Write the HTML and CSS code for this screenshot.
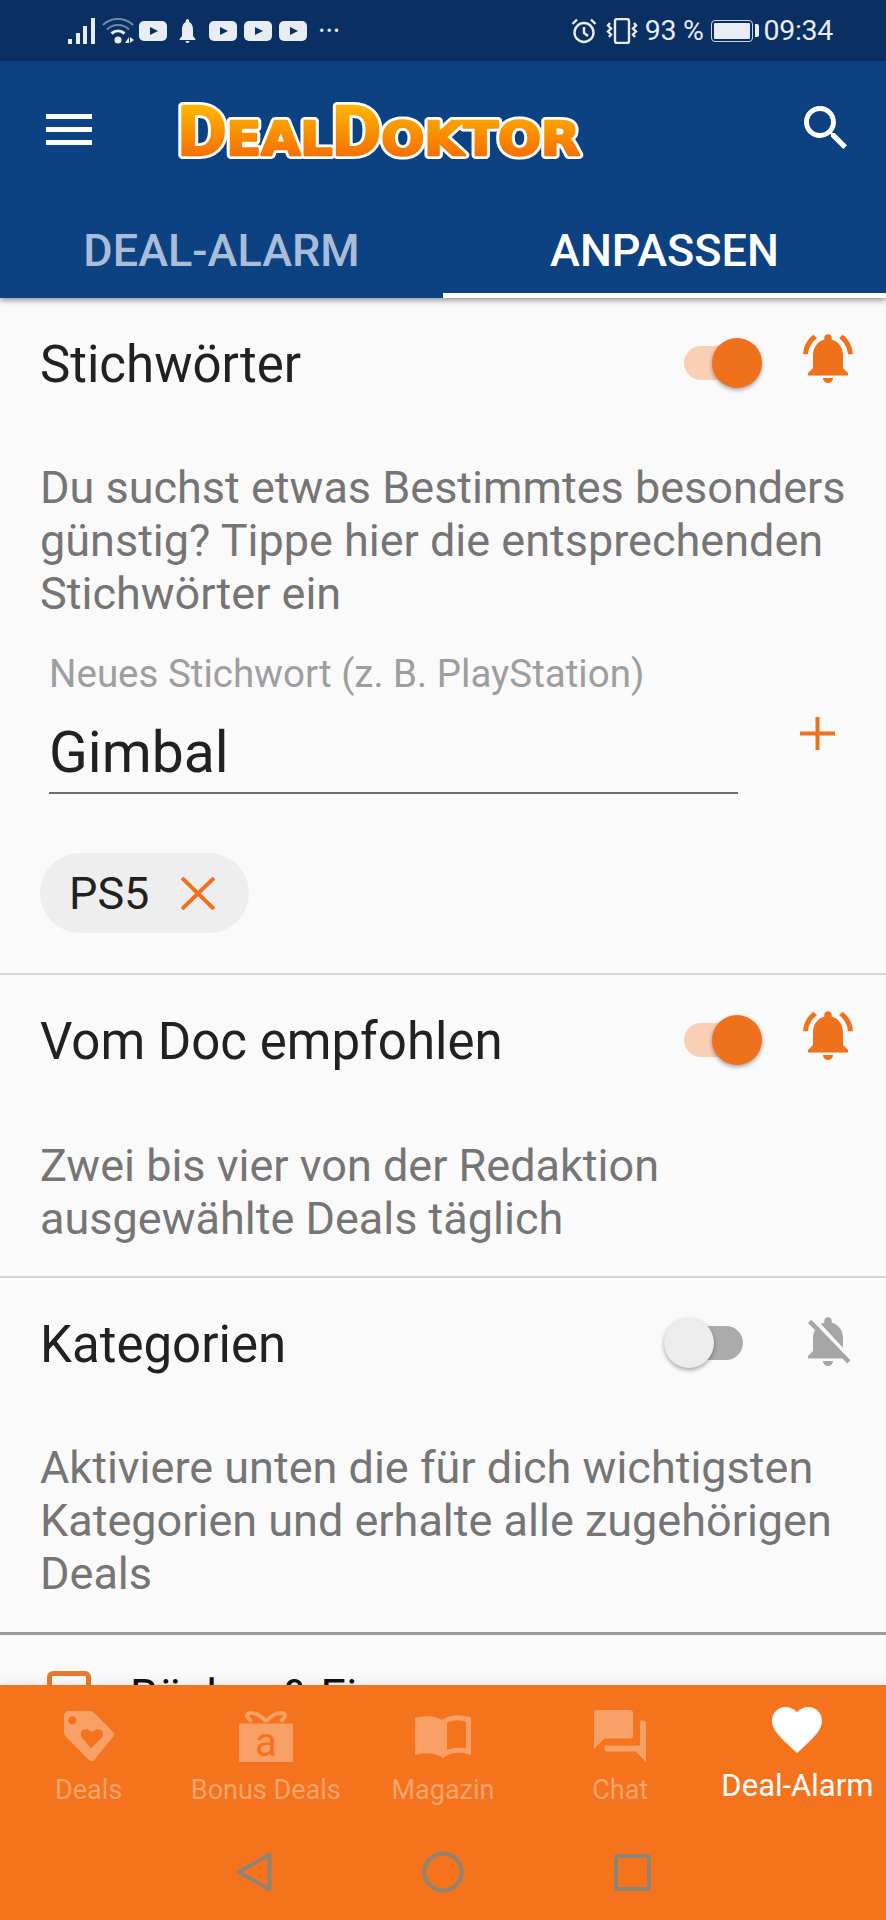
FILE: index.html
```html
<!DOCTYPE html>
<html lang="de">
<head>
    <meta charset="UTF-8">
    <meta name="viewport" content="width=device-width, initial-scale=1.0">
    <title>DealDoktor Deal-Alarm</title>
    <link rel="stylesheet" href="styles.css">
</head>
<body>
    <div class="phone">
        <div class="status-bar">
            <div class="status-left">
                <svg class="st-signal" viewBox="0 0 27 26"><path d="M0 21h4v5H0zM8 15h4v11H8zM15 8h4v18h-4zM23 0h4v26h-4z"/></svg>
                <svg class="st-wifi" viewBox="0 0 32 26"><path class="wifi-dim" d="M1 7c8-8 22-8 30 0M5 11.500c6-6 16-6 22 0"/><path class="wifi-on" d="M9.500 15.500c4-3.500 9-3.500 13 0"/><circle cx="16" cy="22" r="3.500"/><path d="M23 25l4-6v6zM28 19l4 3-4 3z"/></svg>
                <span class="st-play"></span>
                <svg class="st-bell" viewBox="0 0 24 24" preserveAspectRatio="none"><path d="M12 0c-1.300 0-2.300 1-2.300 2.300v.8C6.400 4.300 5 7.500 5 11v6l-3 3v1h20v-1l-3-3v-6c0-3.500-1.400-6.700-4.700-7.900v-.8C14.300 1 13.300 0 12 0zM9.500 22c0 1.300 1.100 2 2.500 2s2.500-.7 2.500-2z"/></svg>
                <span class="st-play st-gap"></span>
                <span class="st-play"></span>
                <span class="st-play"></span>
                <span class="st-dots">•••</span>
            </div>
            <div class="status-right">
                <svg class="st-alarm" viewBox="0 0 26 26"><circle cx="13" cy="14.500" r="9.500"/><path d="M13 9v6l4 3M1.500 6L6 1.500M24.500 6L20 1.500"/></svg>
                <svg class="st-vib" viewBox="0 0 32 26"><rect x="9" y="1" width="14" height="24" rx="2"/><path d="M4 5l-2 2.500 3 3-3 3 3 3-2 2.500M28 5l2 2.500-3 3 3 3-3 3 2 2.500"/></svg>
                <span class="st-text st-percent">93 %</span>
                <div class="st-battery"><span class="st-battery-fill"></span></div>
                <span class="st-battery-cap"></span>
                <span class="st-text st-time">09:34</span>
            </div>
        </div>

        <header class="app-header">
            <div class="toolbar">
                <div class="burger"><span></span><span></span><span></span></div>
                <svg class="logo" viewBox="0 -12 414 90">
                    <defs>
                        <linearGradient id="logoFill" x1="0" y1="0" x2="0" y2="1">
                            <stop offset="0.1" stop-color="#ffbe00"/>
                            <stop offset="0.85" stop-color="#f66a00"/>
                        </linearGradient>
                    </defs>
                    <text class="logo-outline" x="6" y="59" textLength="402" lengthAdjust="spacingAndGlyphs"><tspan class="logo-big">D</tspan>EAL<tspan class="logo-big">D</tspan>OKTOR</text>
                    <text class="logo-face" x="6" y="59" textLength="402" lengthAdjust="spacingAndGlyphs" fill="url(#logoFill)" stroke="url(#logoFill)"><tspan class="logo-big">D</tspan>EAL<tspan class="logo-big">D</tspan>OKTOR</text>
                </svg>
                <svg class="search" viewBox="3 3 17.500 17.500"><path d="M15.500 14h-.79l-.28-.27C15.410 12.590 16 11.110 16 9.500 16 5.910 13.090 3 9.500 3S3 5.910 3 9.500 5.910 16 9.500 16c1.610 0 3.090-.59 4.230-1.570l.27.28v.79l5 4.990L20.490 19l-4.990-5zm-6 0C7.010 14 5 11.990 5 9.500S7.010 5 9.500 5 14 7.010 14 9.500 11.990 14 9.500 14z"/></svg>
            </div>
            <div class="tabs">
                <div class="tab">DEAL-ALARM</div>
                <div class="tab tab-active">ANPASSEN</div>
            </div>
        </header>

        <main class="content">
            <section class="block">
                <div class="block-head">
                    <h2>Stichwörter</h2>
                    <div class="toggle toggle-on"><span class="track"></span><span class="thumb"></span></div>
                    <svg class="bell bell-on" viewBox="2 2 20 20"><path d="M7.580 4.080L6.150 2.650C3.750 4.480 2.170 7.300 2.030 10.500h2c.15-2.650 1.510-4.970 3.550-6.420zm12.390 6.420h2c-.15-3.200-1.730-6.020-4.120-7.850l-1.420 1.430c2.020 1.450 3.390 3.770 3.540 6.420zM18 11c0-3.070-1.640-5.640-4.500-6.320V4c0-.83-.67-1.500-1.500-1.500s-1.500.67-1.500 1.500v.68C7.630 5.360 6 7.920 6 11v5l-2 2v1h16v-1l-2-2v-5zm-6 11c.14 0 .27-.01.4-.04.65-.14 1.180-.58 1.440-1.180.1-.24.15-.5.15-.78h-4c.01 1.100.9 2 2.010 2z"/></svg>
                </div>
                <p class="block-text">Du suchst etwas Bestimmtes besonders günstig? Tippe hier die entsprechenden Stichwörter ein</p>
                <div class="keyword-form">
                    <div class="keyword-field">
                        <div class="keyword-label">Neues Stichwort (z. B. PlayStation)</div>
                        <div class="keyword-value">Gimbal</div>
                    </div>
                    <svg class="add-icon" viewBox="0 0 35 33"><path d="M17.500 0v33M0 16.500h35"/></svg>
                </div>
                <div class="chip">
                    <span>PS5</span>
                    <svg class="chip-x" viewBox="0 0 34 33"><path d="M1 1l32 31M33 1L1 32"/></svg>
                </div>
            </section>

            <section class="block block-middle">
                <div class="block-head">
                    <h2>Vom Doc empfohlen</h2>
                    <div class="toggle toggle-on"><span class="track"></span><span class="thumb"></span></div>
                    <svg class="bell bell-on" viewBox="2 2 20 20"><path d="M7.580 4.080L6.150 2.650C3.750 4.480 2.170 7.300 2.030 10.500h2c.15-2.650 1.510-4.970 3.550-6.420zm12.390 6.420h2c-.15-3.200-1.730-6.020-4.120-7.850l-1.420 1.430c2.020 1.450 3.390 3.770 3.540 6.420zM18 11c0-3.070-1.640-5.640-4.500-6.320V4c0-.83-.67-1.500-1.500-1.500s-1.500.67-1.500 1.500v.68C7.630 5.360 6 7.920 6 11v5l-2 2v1h16v-1l-2-2v-5zm-6 11c.14 0 .27-.01.4-.04.65-.14 1.180-.58 1.440-1.180.1-.24.15-.5.15-.78h-4c.01 1.100.9 2 2.010 2z"/></svg>
                </div>
                <p class="block-text">Zwei bis vier von der Redaktion ausgewählte Deals täglich</p>
            </section>

            <section class="block block-last">
                <div class="block-head">
                    <h2>Kategorien</h2>
                    <div class="toggle"><span class="track"></span><span class="thumb"></span></div>
                    <svg class="bell bell-off" viewBox="3 2 18 20"><path d="M20 18.690L7.840 6.140 5.270 3.490 4 4.760l2.800 2.800v.01c-.52.99-.8 2.160-.8 3.420v5l-2 2v1h13.730l2 2L21 19.720l-1-1.030zM12 22c1.110 0 2-.89 2-2h-4c0 1.110.89 2 2 2zm6-7.320V11c0-3.080-1.640-5.640-4.500-6.320V4c0-.83-.67-1.500-1.500-1.500s-1.500.67-1.500 1.500v.68c-.15.03-.29.08-.42.12-.1.03-.2.07-.3.11h-.01c-.2.080-.4.170-.59.270-.01 0-.01 0-.02.010L18 14.680z"/></svg>
                </div>
                <p class="block-text">Aktiviere unten die für dich wichtigsten Kategorien und erhalte alle zugehörigen Deals</p>
            </section>

            <div class="category">
                <span class="checkbox"></span>
                <span class="category-name">Bücher &amp; Ei</span>
            </div>
        </main>

        <footer class="bottom">
            <nav class="nav-tabs">
                <div class="nav-item">
                    <svg class="nav-icon" viewBox="0 0 50 50"><path fill-rule="evenodd" d="M6 1h19c2 0 3.500.6 5 2l18 18c1.500 1.500 1.500 3.500 0 5L30 48c-1.500 1.500-3.500 1.500-5 0L3 26c-1.500-1.500-2-3-2-5V6c0-3 2-5 5-5zm3 5a4 4 0 1 0 0 8 4 4 0 0 0 0-8zm18 31l9.500-9.500c3-3 2.500-7-.5-8.500-3-1.500-6 0-8 2.500-2-2.500-5-4-8.500-2.500-3 1.500-3.500 5.500-.5 8.500z"/></svg>
                    <span class="nav-label">Deals</span>
                </div>
                <div class="nav-item">
                    <svg class="nav-icon" viewBox="0 0 56 54">
                        <rect x="0" y="14" width="56" height="40" rx="1"/>
                        <path class="gift-ribbon" d="M28 12c-5-6-11-9-16-9-4 0-5 3-2 6l3 3M28 12c5-6 11-9 16-9 4 0 5 3 2 6l-3 3"/>
                        <text class="gift-a" x="28" y="48" text-anchor="middle">a</text>
                    </svg>
                    <span class="nav-label">Bonus Deals</span>
                </div>
                <div class="nav-item">
                    <svg class="nav-icon" viewBox="0 0 56 42"><path d="M27 5C21 1 10 0 0 3v37c10-3 20-2 27 2z"/><path class="book-page" d="M29.500 6.500C36 2.500 45 2 53.500 4.500v32c-8.500-2-17.500-1.500-24 2.500z"/></svg>
                    <span class="nav-label">Magazin</span>
                </div>
                <div class="nav-item">
                    <svg class="nav-icon" viewBox="2 2 20 20"><path d="M21 6h-1.300v9.700H6V17c0 .55.45 1 1 1h11l4 4V7c0-.55-.45-1-1-1zm-4 6V3c0-.55-.45-1-1-1H3c-.55 0-1 .45-1 1v14l4-4h10c.55 0 1-.45 1-1z"/></svg>
                    <span class="nav-label">Chat</span>
                </div>
                <div class="nav-item nav-item-active">
                    <svg class="nav-icon" viewBox="2 3 20 18.350"><path d="M12 21.350l-1.450-1.320C5.400 15.360 2 12.280 2 8.500 2 5.420 4.420 3 7.500 3c1.740 0 3.410.81 4.500 2.090C13.090 3.810 14.760 3 16.500 3 19.580 3 22 5.420 22 8.500c0 3.780-3.400 6.860-8.550 11.540L12 21.350z"/></svg>
                    <span class="nav-label">Deal-Alarm</span>
                </div>
            </nav>
            <div class="system-nav">
                <svg class="sys-back" viewBox="0 0 36 40"><path d="M2.500 20L33.500 2.500v35z"/></svg>
                <svg class="sys-home" viewBox="0 0 42 42"><circle cx="21" cy="21" r="18.500"/></svg>
                <svg class="sys-recent" viewBox="0 0 37 37"><rect x="2" y="2" width="33" height="33" rx="1.500"/></svg>
            </div>
        </footer>
    </div>
</body>
</html>
```
FILE: styles.css
```css
* {
    margin: 0;
    padding: 0;
    box-sizing: border-box;
    font-family: 'Roboto', 'Liberation Sans', sans-serif;
}

body {
    background: #fafafa;
    overflow: hidden;
}

.phone {
    width: 886px;
    height: 1920px;
    display: flex;
    flex-direction: column;
    overflow: hidden;
}

/* status bar */
.status-bar {
    height: 61px;
    flex: none;
    background: #0a2f62;
    color: #e8ecf3;
    display: flex;
    align-items: center;
    justify-content: space-between;
    padding: 0 53px 0 68px;
}

.status-left, .status-right {
    display: flex;
    align-items: center;
}

.status-bar svg {
    display: block;
    fill: #e8ecf3;
}

.st-signal { width: 27px; height: 26px; margin-right: 7px; }

.st-wifi { width: 32px; height: 26px; margin-right: 5px; }

.st-wifi path.wifi-dim, .st-wifi path.wifi-on {
    fill: none;
    stroke-width: 2.2;
}

.st-wifi path.wifi-dim { stroke: #6f87a8; }
.st-wifi path.wifi-on { stroke: #e8ecf3; stroke-width: 3; }

.st-play {
    width: 28px;
    height: 20px;
    margin-right: 7px;
    border-radius: 5px;
    background: #e8ecf3;
    position: relative;
}

.st-play::after {
    content: "";
    position: absolute;
    left: 11px;
    top: 6px;
    border-left: 8px solid #0a2f62;
    border-top: 4px solid transparent;
    border-bottom: 4px solid transparent;
}

.st-gap { margin-left: 12px; }

.st-bell { width: 19px; height: 24px; margin-left: 4px; }

.st-dots {
    font-size: 16px;
    letter-spacing: 2px;
    margin-left: 5px;
    line-height: 20px;
}

.st-alarm, .st-vib {
    fill: none !important;
    stroke: #e8ecf3;
    stroke-width: 2.4;
}

.st-alarm { width: 26px; height: 26px; margin-right: 9px; }
.st-vib { width: 32px; height: 26px; margin-right: 7px; }

.st-text {
    font-size: 28.500px;
    line-height: 32px;
    letter-spacing: -0.3px;
}

.st-percent { margin-right: 7px; }

.st-battery {
    width: 42px;
    height: 22px;
    border: 1.500px solid #c9d3e2;
    border-radius: 4px;
    padding: 2px;
}

.st-battery-fill {
    display: block;
    height: 100%;
    width: 100%;
    background: #e8ecf3;
    border-radius: 1px;
}

.st-battery-cap {
    width: 4px;
    height: 13px;
    margin: 0 5px 0 2px;
    background: #e8ecf3;
    border-radius: 0 2px 2px 0;
}

/* header */
.app-header {
    flex: none;
    background: #0d4282;
    box-shadow: 0 2px 6px rgba(0, 0, 0, 0.45);
    position: relative;
}

.toolbar {
    height: 136px;
    display: flex;
    align-items: center;
    padding: 0 39px 0 46px;
}

.burger {
    width: 46px;
    display: flex;
    flex-direction: column;
    gap: 8px;
    margin-right: 80px;
}

.burger span {
    height: 5px;
    background: #fff;
}

.logo {
    width: 414px;
    height: 90px;
    display: block;
}

.logo text {
    font-family: 'DejaVu Sans', sans-serif;
    font-weight: 700;
    font-size: 46px;
}

.logo .logo-big { font-size: 68px; }

.logo-outline {
    fill: #fff;
    stroke: #fff;
    stroke-width: 8px;
    stroke-linejoin: round;
}

.logo-face {
    stroke-width: 2.500px;
    stroke-linejoin: round;
}

.search {
    width: 43px;
    height: 43px;
    fill: #fff;
    margin-left: auto;
    margin-top: -3px;
}

.tabs {
    display: grid;
    grid-template-columns: 1fr 1fr;
}

.tab {
    height: 101px;
    padding-top: 6px;
    display: flex;
    align-items: center;
    justify-content: center;
    font-size: 45px;
    font-weight: 500;
    color: #a9bdd8;
}

.tab-active {
    color: #fff;
    border-bottom: 5px solid #fff;
    padding-top: 11px;
}

/* page content */
.content {
    flex: 1;
    min-height: 0;
    overflow: hidden;
    background: #fafafa;
}

.block {
    padding: 0 40px 30px;
    border-bottom: 2px solid #d6d6d6;
}

.block-middle {
    padding-bottom: 31px;
}

.block-middle .block-text {
    margin-top: 34px;
}

.block-last {
    padding-bottom: 32px;
    border-bottom: 3px solid #9c9c9c;
}

.block-head {
    height: 130px;
    display: flex;
    align-items: center;
}

h2 {
    flex: 1;
    font-size: 51px;
    font-weight: 400;
    color: #212121;
    padding-top: 2px;
}

.toggle {
    width: 98px;
    height: 50px;
    position: relative;
    margin-right: 41px;
}

.track {
    position: absolute;
    left: 20px;
    right: 19px;
    top: 8px;
    height: 34px;
    border-radius: 17px;
    background: #ababab;
}

.thumb {
    position: absolute;
    left: 0;
    top: 0;
    width: 50px;
    height: 50px;
    border-radius: 50%;
    background: #ececec;
    box-shadow: 0 2px 4px rgba(0, 0, 0, 0.35);
}

.toggle-on .track { background: #f9cfb5; }

.toggle-on .thumb {
    left: auto;
    right: 0;
    background: #f0711c;
}

.bell {
    width: 50px;
    height: 50px;
    margin-right: -7px;
    margin-top: -10px;
}

.bell-on { fill: #f0711c; }

.bell-off {
    fill: #a6a6a6;
    width: 46px;
    margin-right: -5px;
    margin-left: 2px;
    margin-top: -4px;
}

.block-text {
    margin-top: 33px;
    font-size: 45px;
    line-height: 53px;
    color: #757575;
}

.keyword-form {
    display: flex;
    align-items: flex-start;
    margin: 24px 0 0 9px;
}

.keyword-field {
    width: 689px;
    height: 150px;
    border-bottom: 2px solid #6e6e6e;
}

.keyword-label {
    font-size: 38.500px;
    line-height: 60px;
    color: #9e9e9e;
}

.keyword-value {
    font-size: 57px;
    line-height: 66px;
    margin-top: 16px;
    color: #212121;
}

.add-icon {
    width: 35px;
    height: 33px;
    fill: none;
    stroke: #f0711c;
    stroke-width: 4;
    margin: 73px 0 0 62px;
}

.chip {
    width: 209px;
    height: 80px;
    margin-top: 59px;
    margin-bottom: 10px;
    border-radius: 40px;
    background: #eeeeee;
    display: flex;
    align-items: center;
    gap: 32px;
    padding-left: 29px;
    font-size: 45px;
    color: #212121;
}

.chip-x {
    width: 34px;
    height: 33px;
    fill: none;
    stroke: #f0711c;
    stroke-width: 4;
}

.category {
    display: flex;
    align-items: flex-start;
    padding: 36px 0 0 47px;
}

.checkbox {
    width: 44px;
    height: 44px;
    border: 5px solid #e57a30;
    border-radius: 6px;
    margin-right: 39px;
}

.category-name {
    font-size: 45px;
    line-height: 50px;
    color: #111;
}

/* bottom navigation */
.bottom {
    height: 235px;
    flex: none;
    background: #f5731c;
    box-shadow: 0 -4px 8px rgba(0, 0, 0, 0.05);
    position: relative;
}

.nav-tabs {
    display: grid;
    grid-template-columns: repeat(5, 1fr);
    height: 132px;
}

.nav-item {
    display: flex;
    flex-direction: column;
    align-items: center;
    justify-content: flex-end;
    height: 121px;
    color: #f9a56d;
    fill: #f9a066;
}

.nav-icon {
    height: 52px;
    width: 56px;
    display: block;
    margin-bottom: 12px;
    overflow: visible;
}

.nav-label {
    font-size: 27px;
    line-height: 32px;
}

.nav-item-active {
    color: #fff;
    fill: #fff;
    height: 119px;
}

.nav-item-active .nav-icon {
    height: 46px;
    width: 50px;
    margin-bottom: 15px;
}

.nav-item-active .nav-label {
    font-size: 31px;
    line-height: 36px;
}

.gift-ribbon {
    fill: none;
    stroke: #f9a066;
    stroke-width: 4;
}

.gift-a {
    font-family: 'Roboto', sans-serif;
    font-size: 42px;
    fill: #f5731c;
}

.book-page {
    fill: none;
    stroke: #f9a066;
    stroke-width: 5;
}

.system-nav {
    display: flex;
    align-items: center;
    justify-content: center;
    gap: 150px;
    padding-top: 34px;
}

.system-nav svg {
    display: block;
    fill: none;
    stroke: #8f8373;
    stroke-width: 4;
    stroke-linejoin: round;
}

.sys-back { width: 36px; height: 40px; }
.sys-home { width: 42px; height: 42px; }
.sys-recent { width: 37px; height: 37px; }
```
